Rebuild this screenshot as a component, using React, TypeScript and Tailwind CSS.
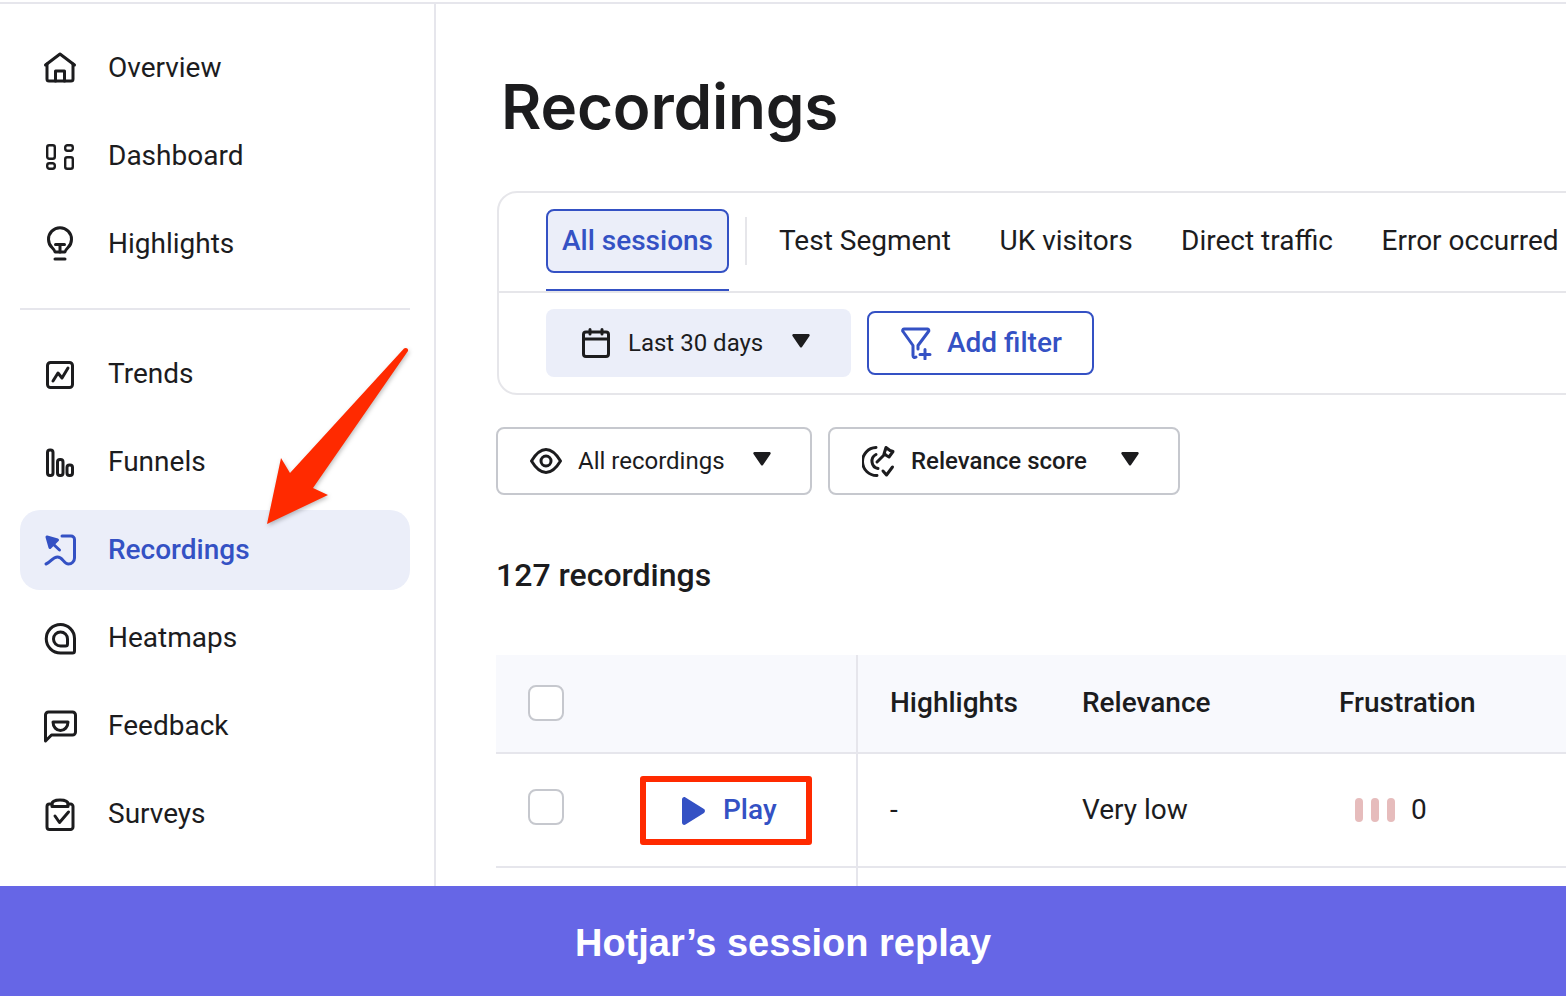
import React from "react";

const navTop = [
    { label: "Overview", icon: <HomeIcon /> },
    { label: "Dashboard", icon: <DashboardIcon /> },
    { label: "Highlights", icon: <BulbIcon /> },
];

const navBottom = [
    { label: "Trends", icon: <TrendsIcon /> },
    { label: "Funnels", icon: <FunnelsIcon /> },
    { label: "Recordings", icon: <RecordingsIcon />, active: true },
    { label: "Heatmaps", icon: <HeatmapsIcon /> },
    { label: "Feedback", icon: <FeedbackIcon /> },
    { label: "Surveys", icon: <SurveysIcon /> },
];

function Svg({ children }: { children: React.ReactNode }) {
    return (
        <svg
            width="36"
            height="36"
            viewBox="0 0 36 36"
            fill="none"
            stroke="currentColor"
            strokeWidth="3"
            strokeLinecap="round"
            strokeLinejoin="round"
            className="shrink-0"
        >
            {children}
        </svg>
    );
}

function HomeIcon() {
    return (
        <Svg>
            <path d="M3.500 15 18 4l14.500 11" />
            <path d="M5 14v15a2 2 0 0 0 2 2h22a2 2 0 0 0 2-2V14" />
            <path d="M13.500 31V21h9v10" />
        </Svg>
    );
}

function DashboardIcon() {
    return (
        <Svg>
            <g strokeWidth="2.400">
                <rect x="5.200" y="7.200" width="7.600" height="13.600" rx="2" />
                <rect x="23.200" y="7.200" width="7.600" height="5.600" rx="2.200" />
                <rect x="5.200" y="25.200" width="7.600" height="5.600" rx="2.200" />
                <rect x="23.200" y="19.200" width="7.600" height="11.600" rx="2" />
            </g>
        </Svg>
    );
}

function BulbIcon() {
    return (
        <Svg>
            <path d="M13 26c-.5-2-1.500-3-3-4.500A11.500 11.500 0 1 1 26 21.500c-1.500 1.500-2.500 2.500-3 4.500Z" />
            <path d="M13.500 18.500h9M18 18.500V26" />
            <path d="M13 33h10" />
        </Svg>
    );
}

function TrendsIcon() {
    return (
        <Svg>
            <rect x="5.500" y="6.500" width="25" height="25" rx="3" />
            <path d="M11 25l5-8 4 5 6-10" />
        </Svg>
    );
}

function FunnelsIcon() {
    return (
        <Svg>
            <rect x="5.500" y="6" width="5.500" height="25.500" rx="2.500" />
            <rect x="15.500" y="15.500" width="5.500" height="16" rx="2.500" />
            <rect x="25" y="21" width="5.500" height="10.500" rx="2.500" />
        </Svg>
    );
}

function RecordingsIcon() {
    return (
        <Svg>
            <path d="M20 4h9a3.500 3.500 0 0 1 3.500 3.500V26a6 6 0 0 1-6 6c-5 0-5.500-7-11-7-5 0-6.500 5-11.500 7" />
            <path d="M10 11l7.500 7" />
            <path d="M5 5l10.500 3L8 15.500Z" fill="currentColor" />
        </Svg>
    );
}

function HeatmapsIcon() {
    return (
        <Svg>
            <path d="M18.500 4.500A14 14 0 0 1 32.500 18.500V31a2 2 0 0 1-2 2h-12a14.250 14.250 0 0 1 0-28.500Z" />
            <path d="M18.500 12a7 7 0 0 1 7 7v5a2 2 0 0 1-2 2h-5a7 7 0 0 1 0-14Z" />
        </Svg>
    );
}

function FeedbackIcon() {
    return (
        <Svg>
            <path d="M3.500 33V7a3 3 0 0 1 3-3h24a3 3 0 0 1 3 3v17a3 3 0 0 1-3 3H9.500Z" />
            <path d="M11 14h15c0 5-3.500 8.500-7.500 8.500S11 19 11 14Z" />
        </Svg>
    );
}

function SurveysIcon() {
    return (
        <Svg>
            <path d="M10 8H7.500A2.500 2.500 0 0 0 5 10.500V31a2.500 2.500 0 0 0 2.500 2.500h21A2.500 2.500 0 0 0 31 31V10.500A2.500 2.500 0 0 0 28.500 8H26" />
            <path d="M10 10.500V8c0-2.500 3.500-4 8-4s8 1.500 8 4v2.500Z" />
            <path d="M13 20l4.500 6.500L26.500 16" />
        </Svg>
    );
}

function CalendarIcon() {
    return (
        <svg width="30" height="32" viewBox="0 0 30 32" fill="none" stroke="currentColor" strokeWidth="3" strokeLinecap="round" strokeLinejoin="round" className="shrink-0">
            <rect x="2.500" y="5" width="25" height="24.500" rx="2.500" />
            <path d="M2.500 12h25M9 2.500V7M21 2.500V7" />
        </svg>
    );
}

function FilterPlusIcon() {
    return (
        <svg width="32" height="34" viewBox="0 0 32 34" fill="none" stroke="currentColor" strokeWidth="3" strokeLinecap="round" strokeLinejoin="round" className="shrink-0">
            <path d="M18 23v-3.500L28.500 5.500A1.500 1.500 0 0 0 27.500 3H4A1.500 1.500 0 0 0 3 5.500L13 19.500v10c0 1.800 1.500 2.500 3 1.500" />
            <path d="M20 28.500h10M25 23.500v9.500" />
        </svg>
    );
}

function EyeIcon() {
    return (
        <svg width="34" height="32" viewBox="0 0 34 32" fill="none" stroke="currentColor" strokeWidth="3" strokeLinecap="round" strokeLinejoin="round" className="shrink-0">
            <path d="M2.500 16C7 8.500 12 4.500 17 4.500S27 8.500 31.500 16C27 23.500 22 27.500 17 27.500S7 23.500 2.500 16Z" />
            <circle cx="17" cy="16" r="5" />
        </svg>
    );
}

function RelevanceIcon() {
    return (
        <svg width="34" height="34" viewBox="0 0 34 34" fill="none" stroke="currentColor" strokeWidth="3" strokeLinecap="round" strokeLinejoin="round" className="shrink-0">
            <path d="M14 3.500A14 14 0 0 0 15 31.500" />
            <path d="M14 10.500a7.500 7.500 0 0 0 2 14" />
            <path d="M15 18l8-8" />
            <path d="M22 10l2-6.500 4 3 3 1-4 5.500Z" />
            <path d="M21 27l3.500 4 6-8" />
        </svg>
    );
}

function Caret() {
    return (
        <svg width="18" height="14" viewBox="0 0 18 14" className="shrink-0 -translate-y-[2px]">
            <path d="M1.500 0h15a1.200 1.200 0 0 1 1 1.900L10 13a1.300 1.300 0 0 1-2 0L.5 1.900a1.200 1.200 0 0 1 1-1.900Z" fill="#1c1c1e" />
        </svg>
    );
}

function NavItem({ label, icon, active }: { label: string; icon: React.ReactNode; active?: boolean }) {
    return (
        <div
            className={
                active
                    ? "flex h-20 items-center gap-[30px] rounded-[20px] bg-[#ebeef9] pl-[22px] font-medium text-[#3451c4]"
                    : "flex h-20 items-center gap-[30px] rounded-[20px] pl-[22px] text-[#1c1c1e]"
            }
        >
            {icon}
            <span className="text-[28px] leading-none">{label}</span>
        </div>
    );
}

function Checkbox() {
    return <div className="mb-[6px] h-9 w-9 rounded-lg border-2 border-[#c6c8ce] bg-white" />;
}

export default function App() {
    return (
        <div className="relative flex h-[996px] w-[1566px] flex-col overflow-hidden bg-white pt-0.5 font-['Roboto',sans-serif] text-[#1c1c1e]">
            <div className="flex h-[884px] border-t-2 border-[#e6e6ec]">
                {/* Sidebar */}
                <aside className="w-[436px] shrink-0 border-r-2 border-[#e6e6ec] pl-5 pr-6 pt-6">
                    <div className="flex flex-col gap-2">
                        {navTop.map((item) => (
                            <NavItem key={item.label} {...item} />
                        ))}
                    </div>
                    <div className="mb-6 mt-6 h-0.5 bg-[#e6e6ec]" />
                    <div className="flex flex-col gap-2">
                        {navBottom.map((item) => (
                            <NavItem key={item.label} {...item} />
                        ))}
                    </div>
                </aside>

                {/* Main */}
                <main className="min-w-0 flex-1 overflow-hidden pl-[60px]">
                    <h1 className="ml-[5px] mt-[69px] font-['Inter',sans-serif] text-[62px] font-semibold leading-[68px] tracking-[-0.2px]">
                        Recordings
                    </h1>

                    {/* Segments card */}
                    <div className="ml-px mt-[50px] w-[1200px] rounded-l-[20px] border-2 border-[#e6e6ea]">
                        <div className="flex h-[100px] items-start border-b-2 border-[#e6e6ea] pl-[47px] pt-4">
                            <div className="flex h-[82px] w-[183px] shrink-0 flex-col border-b-2 border-[#3451c4]">
                                <div className="flex h-16 items-center justify-center rounded-lg border-2 border-[#3451c4] bg-[#ebeef9] text-[28px] font-medium text-[#3451c4]">
                                    All sessions
                                </div>
                            </div>
                            <div className="ml-4 mt-2 h-12 w-0.5 bg-[#e6e6ea]" />
                            <div className="ml-[32px] flex h-16 items-center gap-[48.5px] whitespace-nowrap text-[28px]">
                                <span>Test Segment</span>
                                <span>UK visitors</span>
                                <span>Direct traffic</span>
                                <span>Error occurred</span>
                            </div>
                        </div>
                        <div className="flex h-[100px] items-start gap-4 pl-[47px] pt-4">
                            <div className="flex h-[68px] w-[305px] items-center rounded-lg bg-[#ebeef9] pl-[35px]">
                                <CalendarIcon />
                                <span className="ml-[17px] text-[24px]">Last 30 days</span>
                                <span className="ml-[29px]">
                                    <Caret />
                                </span>
                            </div>
                            <div className="mt-0.5 flex h-16 w-[227px] items-center rounded-lg border-2 border-[#3451c4] pl-[31px] text-[28px] font-medium text-[#3451c4]">
                                <FilterPlusIcon />
                                <span className="ml-[15px]">Add filter</span>
                            </div>
                        </div>
                    </div>

                    {/* Sort dropdowns */}
                    <div className="mt-8 flex gap-4">
                        <div className="flex h-[68px] w-[316px] items-center rounded-lg border-2 border-[#c6c8ce] pl-[31px]">
                            <EyeIcon />
                            <span className="ml-[15px] text-[24px]">All recordings</span>
                            <span className="ml-[28px]">
                                <Caret />
                            </span>
                        </div>
                        <div className="flex h-[68px] w-[352px] items-center rounded-lg border-2 border-[#c6c8ce] pl-[32px]">
                            <RelevanceIcon />
                            <span className="ml-[15px] text-[24px] font-medium">Relevance score</span>
                            <span className="ml-[34px]">
                                <Caret />
                            </span>
                        </div>
                    </div>

                    <div className="mt-[60px] text-[32px] font-medium leading-[40px]">127 recordings</div>

                    {/* Table */}
                    <div className="mt-[60px] w-[1200px]">
                        <div className="flex h-[99px] items-center border-b-2 border-[#e6e6ec] bg-[#f8f9fd] text-[28px] font-medium">
                            <div className="flex h-full w-[362px] items-center border-r-2 border-[#e6e6ec] pl-8">
                                <div className="mt-1">
                                    <Checkbox />
                                </div>
                            </div>
                            <div className="mb-0.5 w-[224px] pl-8">Highlights</div>
                            <div className="mb-0.5 w-[257px]">Relevance</div>
                            <div className="mb-0.5">Frustration</div>
                        </div>
                        <div className="flex h-[114px] items-center border-b-2 border-[#e6e6ec] text-[28px]">
                            <div className="flex h-full w-[362px] items-center border-r-2 border-[#e6e6ec] pl-8">
                                <Checkbox />
                                <div className="ml-[76px] mt-px flex h-[69px] w-[172px] items-center rounded-[3px] border-[6px] border-[#ff2a00] pl-[34px] font-medium text-[#3451c4]">
                                    <svg width="26" height="30" viewBox="0 0 26 30" className="shrink-0">
                                        <path d="M2 3.500C2 1.500 4 .5 5.500 1.500L24 13c1.300.9 1.300 3 0 4L5.500 28.500C4 29.500 2 28.500 2 26.500Z" fill="#3451c4" />
                                    </svg>
                                    <span className="-mt-0.5 ml-[17px]">Play</span>
                                </div>
                            </div>
                            <div className="w-[224px] pl-8">-</div>
                            <div className="w-[273px]">Very low</div>
                            <div className="flex items-center">
                                <span className="h-6 w-2 rounded-full bg-[#e6bcbc]" />
                                <span className="ml-2 h-6 w-2 rounded-full bg-[#e6bcbc]" />
                                <span className="ml-2 h-6 w-2 rounded-full bg-[#e6bcbc]" />
                                <span className="ml-4">0</span>
                            </div>
                        </div>
                        <div className="h-10 w-[362px] border-r-2 border-[#e6e6ec]" />
                    </div>
                </main>
            </div>

            {/* Caption */}
            <div className="flex h-[110px] items-center justify-center bg-[#6666e6] pt-1 font-['Liberation_Sans',sans-serif] text-[38px] font-bold text-white">
                Hotjar’s session replay
            </div>

            {/* Annotation arrow */}
            <svg width="1566" height="996" viewBox="0 0 1566 996" className="pointer-events-none absolute left-0 top-0 drop-shadow-[1px_2px_2px_rgba(0,0,0,0.25)]">
                <path d="M404 348.500a2.500 2.500 0 0 1 4 2.500L313 488l15 7-61 29 14-66 9 15Z" fill="#ff2a00" />
            </svg>
        </div>
    );
}
